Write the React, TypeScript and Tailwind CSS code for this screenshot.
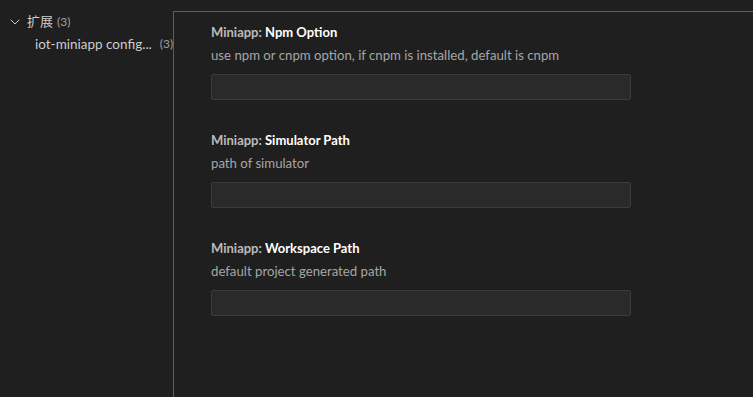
import React from "react";
import { ChevronDown } from "lucide-react";

interface Setting {
  id: string;
  name: string;
  description: string;
}

const settings: Setting[] = [
  { id: "npm", name: "Npm Option", description: "use npm or cnpm option, if cnpm is installed, default is cnpm" },
  { id: "sim", name: "Simulator Path", description: "path of simulator" },
  { id: "ws", name: "Workspace Path", description: "default project generated path" },
];

export default function App() {
  return (
    <div
      className="flex w-[753px] h-[397px] overflow-hidden bg-[#1f1f1f] text-[13px] text-[#cccccc]"
      style={{ fontFamily: '"Segoe UI", Lato, "Noto Sans CJK SC", sans-serif' }}
    >
      {/* settings tree */}
      <div className="w-[173px] shrink-0 pt-[11px]">
        <div className="flex items-center h-[22px] pl-[7px]">
          <ChevronDown className="w-4 h-4 text-[#cccccc] stroke-[1.5]" />
          <span className="ml-[4px]">扩展</span>
          <span className="ml-[4px] text-[12px] text-[#a0a0a0]">(3)</span>
        </div>
        <div className="flex items-center h-[22px] pl-[35px] whitespace-nowrap">
          <span className="text-[13.5px]">iot-miniapp config...</span>
          <span className="ml-[8px] text-[12px] text-[#a0a0a0]">(3)</span>
        </div>
      </div>

      {/* settings list */}
      <div className="flex-1 mt-[11px] border-t border-l border-[#0078d4] pl-[37px] pt-[11px]">
        {settings.map((s) => (
          <div key={s.id} className="pb-[31px]">
            <div className="h-[18px] leading-[18px] font-bold">
              <span className="text-[#bbbbbb]">Miniapp: </span>
              <span className="text-[#ffffff]">{s.name}</span>
            </div>
            <div className="mt-[5px] h-[18px] leading-[18px] text-[13.2px] text-[#a6a6a6]">{s.description}</div>
            <div className="mt-[10px] w-[420px] h-[26px] rounded-[2px] border border-[#3c3c3c] bg-[#2a2a2a]" />
          </div>
        ))}
      </div>
    </div>
  );
}
